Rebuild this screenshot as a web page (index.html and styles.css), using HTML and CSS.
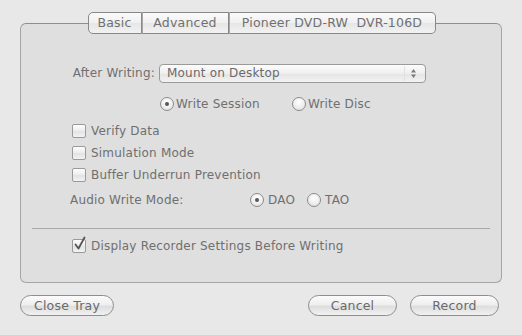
FILE: index.html
```
<!DOCTYPE html>
<html>
<head>
<meta charset="utf-8">
<link rel="stylesheet" href="styles.css">
</head>
<body>
<div class="tabs">
  <div class="tab t1">Basic</div>
  <div class="tab t2">Advanced</div>
  <div class="tab t3">Pioneer DVD-RW&nbsp; DVR-106D</div>
</div>
<div class="box">
  <div class="row after">
    <span class="label">After Writing:</span>
    <div class="popup"><span class="ptext">Mount on Desktop</span><span class="arrows"><svg width="7" height="11" viewBox="0 0 7 11"><path d="M3.5 1 L6 4.5 L1 4.5 Z M3.5 10 L6 6.5 L1 6.5 Z" fill="#7a7a7a"/></svg></span></div>
  </div>
  <div class="row radios1">
    <span class="radio on"></span><span class="rtext ws">Write Session</span>
    <span class="radio"></span><span class="rtext">Write Disc</span>
  </div>
  <div class="checks">
    <div class="crow"><span class="check"></span><span>Verify Data</span></div>
    <div class="crow"><span class="check"></span><span>Simulation Mode</span></div>
    <div class="crow"><span class="check"></span><span>Buffer Underrun Prevention</span></div>
  </div>
  <div class="row audio">
    <span class="alabel">Audio Write Mode:</span>
    <span class="radio on"></span><span class="rtext dao">DAO</span>
    <span class="radio"></span><span class="rtext">TAO</span>
  </div>
  <div class="sep"></div>
  <div class="crow display"><span class="check checked"><svg width="14" height="16" viewBox="0 0 14 16"><path d="M2.5 8.5 L5.5 12.5 L11.5 1.5" fill="none" stroke="#555" stroke-width="1.8" stroke-linejoin="round" stroke-linecap="round"/></svg></span><span>Display Recorder Settings Before Writing</span></div>
</div>
<div class="buttons">
  <div class="btn close">Close Tray</div>
  <div class="spacer"></div>
  <div class="btn cancel">Cancel</div>
  <div class="btn record">Record</div>
</div>
</body>
</html>
```
FILE: styles.css
```
html, body { margin: 0; padding: 0; }
body {
  width: 522px; height: 335px; overflow: hidden;
  background: #e8e8e8;
  font-family: "DejaVu Sans", "Liberation Sans", sans-serif;
  font-size: 12px;
  letter-spacing: 0.2px;
  color: #6f6f6f;
  padding: 12px 20px 0 20px;
  box-sizing: border-box;
}
.tabs {
  display: flex; justify-content: center;
  position: relative; z-index: 1;
  margin-bottom: -11px;
  margin-left: 49px; margin-right: 48px;
}
.tab {
  height: 20px; line-height: 20px;
  text-align: center;
  border: 1px solid #888;
  border-left: none;
  background: linear-gradient(#fbfbfb, #f0f0f0 50%, #e6e6e6 51%, #f2f2f2);
  color: #707070;
  font-size: 12.5px;
}
.t1 { width: 52px; border-left: 1px solid #888; border-radius: 5px 0 0 5px; }
.t2 { width: 85px; border-left: 1px solid #a8a8a8; }
.t3 { width: 205px; border-left: 1px solid #a8a8a8; border-radius: 0 5px 5px 0; }
.box {
  height: 260px;
  border: 1px solid #a5a5a5;
  border-top-color: #8e8e8e;
  border-radius: 6px;
  background: #dfdfdf;
  padding: 0 0 0 49px;
  box-sizing: border-box;
}
.row { display: flex; align-items: center; }
.after { margin-top: 39px; height: 20px; }
.label { width: 85px; text-align: right; margin-right: 4px; }
.popup {
  width: 265px; height: 17px;
  border: 1px solid #9a9a9a; border-radius: 4px;
  background: linear-gradient(#fcfcfc, #efefef 50%, #e4e4e4 51%, #f3f3f3);
  display: flex; align-items: center;
}
.ptext { flex: 1; padding-left: 7px; color: #6a6a6a; }
.arrows { width: 16px; display: flex; justify-content: center; align-items: center; border-left: 1px solid #e0e0e0; height: 15px; margin-right: 4px; }
.radios1 { margin-top: 13px; height: 16px; padding-left: 90px; }
.radio {
  width: 12px; height: 12px; border-radius: 50%;
  border: 1px solid #8c8c8c;
  background: radial-gradient(circle at 50% 35%, #ffffff, #ececec 60%, #d8d8d8);
  position: relative; flex: none;
}
.radio.on::after {
  content: ""; position: absolute; left: 4px; top: 4px;
  width: 4px; height: 4px; border-radius: 50%; background: #555;
}
.rtext { margin-left: 2px; }
.ws { margin-right: 32px; }
.checks { margin-top: 8px; padding-left: 2px; }
.crow { display: flex; align-items: center; height: 22px; }
.crow span:last-child { margin-left: 5px; }
.check {
  width: 12px; height: 12px; border: 1px solid #9a9a9a; border-radius: 2px;
  background: linear-gradient(#fdfdfd, #ececec 50%, #e2e2e2 51%, #f2f2f2);
  flex: none; position: relative;
}
.check svg { position: absolute; left: 0; top: -4px; }
.audio { margin-top: 3px; height: 22px; }
.alabel { width: 180px; }
.dao { margin-right: 12px; }
.audio .rtext { margin-left: 4px; }
.sep { height: 1px; background: #a8a8a8; margin: 17px 11px 0 -38px; }
.display { margin-top: 6px; padding-left: 2px; height: 22px; }
.buttons { display: flex; margin-top: 12px; }
.spacer { flex: 1; }
.btn {
  height: 19px; line-height: 19px;
  border: 1px solid #8e8e8e; border-radius: 11px;
  background: linear-gradient(#fbfbfb, #efefef 45%, #dedede 55%, #f1f1f1);
  text-align: center; color: #6a6a6a;
  font-size: 12.5px;
}
.close { width: 92px; }
.cancel { width: 87px; margin-right: 13px; }
.record { width: 87px; margin-right: 3px; }
```
